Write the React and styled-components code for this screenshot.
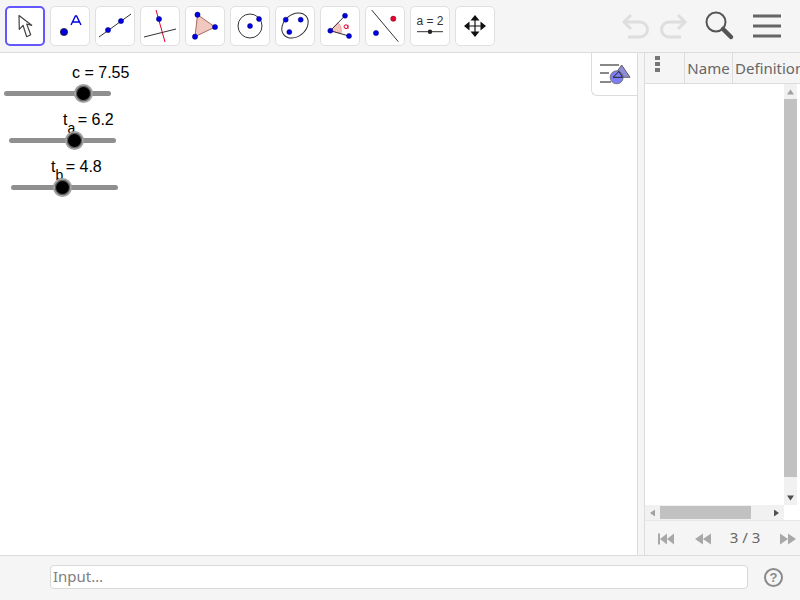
import React from 'react';
import styled, { createGlobalStyle } from 'styled-components';

const GlobalStyle = createGlobalStyle`
  html, body {
    margin: 0;
    padding: 0;
    background: #fff;
  }
  #root {
    width: 800px;
    height: 600px;
    overflow: hidden;
  }
`;

const Page = styled.div`
  width: 800px;
  height: 600px;
  display: flex;
  flex-direction: column;
  font-family: "Liberation Sans", Arial, sans-serif;
  background: #fff;
`;

const Toolbar = styled.div`
  height: 53px;
  flex: none;
  display: flex;
  align-items: flex-start;
  padding: 6px 0 0 5px;
  box-sizing: border-box;
  gap: 5px;
  background: #f5f5f5;
  border-bottom: 1px solid #dcdcdc;
`;

const ToolButton = styled.div`
  width: 40px;
  height: 40px;
  box-sizing: border-box;
  flex: none;
  background: #fff;
  border-radius: 5px;
  border: ${p => (p.$active ? '2px solid #6557ff' : '1px solid #e0e0e0')};
  display: flex;
  align-items: center;
  justify-content: center;
  svg { display: block; flex: none; }
`;

const ToolbarRight = styled.div`
  margin-left: auto;
  display: flex;
  align-items: center;
  height: 40px;
  padding-right: 19px;
  svg { display: block; }
`;

const Gap = styled.span`
  width: ${p => p.$w}px;
  flex: none;
`;

const Main = styled.div`
  flex: 1;
  display: flex;
  min-height: 0;
`;

const Graphics = styled.div`
  position: relative;
  width: 638px;
  box-sizing: border-box;
  flex: none;
  background: #fff;
  border-right: 1px solid #dcdcdc;
`;

const StyleBarTab = styled.div`
  position: absolute;
  top: 0;
  right: 0;
  width: 46px;
  height: 43px;
  box-sizing: border-box;
  background: #fff;
  border-left: 1px solid #dcdcdc;
  border-bottom: 1px solid #dcdcdc;
  border-bottom-left-radius: 6px;
  display: flex;
  align-items: center;
  justify-content: center;
`;

const SliderBox = styled.div`
  position: absolute;
  left: ${p => p.$x}px;
  top: ${p => p.$y}px;
  width: 107px;
  height: 5px;
  background: #8f8f8f;
  border-radius: 3px;
`;

const Knob = styled.div`
  position: absolute;
  left: ${p => p.$at}px;
  top: -7px;
  width: 19px;
  height: 19px;
  box-sizing: border-box;
  border-radius: 50%;
  background: #000;
  border: 2.5px solid #a0a0a0;
  box-shadow: inset 0 0 0 1px #606060;
`;

const SliderLabel = styled.div`
  position: absolute;
  left: ${p => p.$x}px;
  top: ${p => p.$y}px;
  font-size: 16px;
  line-height: 18px;
  color: #000;
  white-space: nowrap;
`;

const Sub = styled.span`
  position: relative;
  top: 8px;
  font-size: 14px;
  margin-right: -2px;
`;

const Splitter = styled.div`
  width: 6px;
  flex: none;
  background: #f5f5f5;
  border-right: 1px solid #dcdcdc;
`;

const AlgebraPanel = styled.div`
  flex: 1;
  min-width: 0;
  display: flex;
  flex-direction: column;
  overflow: hidden;
`;

const TableHead = styled.div`
  height: 31px;
  flex: none;
  box-sizing: border-box;
  display: flex;
  background: #f5f5f5;
  border-bottom: 1px solid #dcdcdc;
`;

const HeadCell = styled.div`
  width: ${p => p.$w}px;
  flex: none;
  box-sizing: border-box;
  border-right: ${p => (p.$last ? 'none' : '1px solid #dcdcdc')};
  display: flex;
  align-items: center;
  justify-content: ${p => (p.$last ? 'flex-start' : 'center')};
  padding-left: ${p => (p.$last ? '2px' : '0')};
  font-family: "Noto Sans", sans-serif;
  font-size: 15px;
  color: #666;
  white-space: nowrap;
`;

const Dots = styled.div`
  display: flex;
  flex-direction: column;
  gap: 2px;
  margin: -9px 15px 0 0;
  span {
    width: 5px;
    height: 4px;
    background: #777;
  }
`;

const TableBody = styled.div`
  flex: 1;
  display: flex;
  min-height: 0;
`;

const TableArea = styled.div`
  flex: 1;
  background: #fff;
`;

const VScroll = styled.div`
  width: 13px;
  flex: none;
  margin-right: 3px;
  background: #f1f1f1;
  display: flex;
  flex-direction: column;
`;

const ScrollArrow = styled.div`
  height: 15px;
  flex: none;
  display: flex;
  align-items: center;
  justify-content: center;
`;

const VThumb = styled.div`
  height: 378px;
  flex: none;
  background: #c1c1c1;
`;

const VTrack = styled.div`
  flex: 1;
`;

const HScrollRow = styled.div`
  height: 15px;
  flex: none;
  display: flex;
  background: #fff;
`;

const HScroll = styled.div`
  width: 139px;
  flex: none;
  background: #f1f1f1;
  display: flex;
  align-items: stretch;
`;

const HArrow = styled.div`
  width: 15px;
  flex: none;
  display: flex;
  align-items: center;
  justify-content: center;
`;

const HThumb = styled.div`
  width: 91px;
  flex: none;
  margin: 1px 0;
  background: #c1c1c1;
`;

const HTrack = styled.div`
  flex: 1;
`;

const Pager = styled.div`
  height: 35px;
  flex: none;
  display: flex;
  align-items: center;
  background: #f5f5f5;
  border-top: 1px solid #e8e8e8;
  box-sizing: border-box;
  padding: 2px 0 0 12px;
  svg { display: block; flex: none; }
`;

const PageText = styled.div`
  width: 54px;
  flex: none;
  text-align: center;
  font-family: "Noto Sans", sans-serif;
  font-size: 15px;
  color: #666;
  margin: -5px 7px 0 6px;
`;

const InputBar = styled.div`
  height: 45px;
  flex: none;
  box-sizing: border-box;
  display: flex;
  align-items: center;
  padding: 0 17px 2px 50px;
  background: #f5f5f5;
  border-top: 1px solid #dcdcdc;
`;

const InputField = styled.div`
  width: 698px;
  height: 24px;
  box-sizing: border-box;
  flex: none;
  background: #fff;
  border: 1px solid #d8d8d8;
  border-radius: 4px;
  padding-left: 2px;
  font-family: "Noto Sans", sans-serif;
  font-size: 15px;
  line-height: 21px;
  color: #808080;
`;

const HelpIcon = styled.div`
  margin-left: auto;
  width: 19px;
  height: 19px;
  box-sizing: border-box;
  border: 2px solid #8a8a8a;
  border-radius: 50%;
  display: flex;
  align-items: center;
  justify-content: center;
  font-size: 13px;
  font-weight: bold;
  color: #8a8a8a;
`;

const NumberLabel = styled.text`
  font-family: "Liberation Sans", sans-serif;
  font-size: 12px;
  fill: #333;
`;

const Flippable = styled.svg`
  transform: ${p => (p.$flip ? 'scaleX(-1)' : 'none')};
`;

const TriangleSvg = styled.svg`
  transform: rotate(${p => p.$rotate}deg);
`;

const Blue = '#0000e0';
const Ring = '#00007a';

const Pt = ({ x, y, r = 2.6, fill = Blue }) => (
  <circle cx={x} cy={y} r={r} fill={fill} stroke={fill === Blue ? Ring : '#8a0018'} strokeWidth="0.5" />
);

const MoveIcon = () => (
  <svg width="20" height="24" viewBox="0 0 20 24">
    <path d="M4 1.5 L4.3 15.3 L8 11.3 L11.7 22.7 L15.7 20.7 L11.7 10 L16.7 11.3 Z" fill="#fff" stroke="#444" strokeWidth="1.2" strokeLinejoin="round" />
  </svg>
);

const PointIcon = () => (
  <svg width="32" height="32" viewBox="0 0 32 32">
    <circle cx="10" cy="22" r="3.6" fill={Blue} stroke="#222" strokeWidth="0.8" />
    <path d="M17 15 L21.4 6 L22.6 6 L27 15 M18.8 12 L25.2 12" fill="none" stroke={Blue} strokeWidth="1.4" />
  </svg>
);

const LineIcon = () => (
  <svg width="36" height="32" viewBox="0 0 36 32">
    <path d="M2 27 L34 4" stroke="#333" strokeWidth="1" />
    <Pt x={11} y={20} />
    <Pt x={24} y={11} />
  </svg>
);

const PerpIcon = () => (
  <svg width="36" height="36" viewBox="0 0 36 36">
    <path d="M14 2 L23 34" stroke="#e4002b" strokeWidth="1" />
    <path d="M2 29 L34 21" stroke="#333" strokeWidth="1" />
    <Pt x={17} y={11} />
  </svg>
);

const PolygonIcon = () => (
  <svg width="32" height="34" viewBox="0 0 32 34">
    <path d="M8.5 5.7 L26 18 L6 27.7 Z" fill="#f0c8c0" stroke="#a86a5e" strokeWidth="1" />
    <Pt x={8.5} y={5.7} />
    <Pt x={26} y={18} />
    <Pt x={6} y={27.7} />
  </svg>
);

const CircleIcon = () => (
  <svg width="32" height="32" viewBox="0 0 32 32">
    <circle cx="16" cy="16" r="12" fill="none" stroke="#333" strokeWidth="1" />
    <Pt x={16} y={16} r={2.5} />
    <Pt x={25} y={9} r={2.5} />
  </svg>
);

const EllipseIcon = () => (
  <svg width="32" height="34" viewBox="0 0 32 34">
    <ellipse cx="16" cy="16.5" rx="14.5" ry="11" transform="rotate(-40 16 16.5)" fill="none" stroke="#333" strokeWidth="1" />
    <Pt x={6.7} y={10.7} r={2.5} />
    <Pt x={21.7} y={10.7} r={2.5} />
    <Pt x={10.3} y={23} r={2.5} />
  </svg>
);

const AngleIcon = () => (
  <svg width="34" height="32" viewBox="0 0 34 32">
    <path d="M7.3 20.7 L15 12.8 A11 11 0 0 1 17.9 23.7 Z" fill="#f4c6bc" stroke="#e4002b" strokeWidth="0.3" />
    <path d="M7.3 20.7 L22 5.7 M7.3 20.7 L26 26" stroke="#333" strokeWidth="1" fill="none" />
    <Pt x={7.3} y={20.7} r={2.5} />
    <Pt x={22} y={5.7} r={2.5} />
    <Pt x={26} y={26} r={2.5} />
    <circle cx="23" cy="16.7" r="1.9" fill="none" stroke="#e4002b" strokeWidth="1" />
    <path d="M25 14.8 L25 19" stroke="#e4002b" strokeWidth="0.8" />
  </svg>
);

const ReflectIcon = () => (
  <svg width="36" height="36" viewBox="0 0 36 36">
    <path d="M4.7 2 L31.3 33.7" stroke="#333" strokeWidth="1" />
    <Pt x={9} y={25} />
    <Pt x={26.3} y={10.7} fill="#e4002b" />
  </svg>
);

const SliderIcon = () => (
  <svg width="36" height="32" viewBox="0 0 36 32">
    <NumberLabel x="18" y="15" textAnchor="middle">a = 2</NumberLabel>
    <path d="M5 21.7 L31 21.7" stroke="#333" strokeWidth="1" />
    <circle cx="18" cy="21.7" r="2.2" fill="#222" />
  </svg>
);

const MoveViewIcon = () => (
  <svg width="24" height="24" viewBox="0 0 24 24">
    <path d="M12 2 V22 M2 12 H22" stroke="#111" strokeWidth="1.2" />
    <path d="M12 1 L16.5 6.5 H7.5 Z M12 23 L16.5 17.5 H7.5 Z M1 12 L6.5 7.5 V16.5 Z M23 12 L17.5 7.5 V16.5 Z" fill="#111" />
  </svg>
);

const UndoIcon = ({ flip }) => (
  <Flippable $flip={flip} width="30" height="26" viewBox="0 0 30 26">
    <path d="M3 9 H19 A7.5 7.5 0 0 1 19 24 H7" fill="none" stroke="#dedede" strokeWidth="3" />
    <path d="M10 2 L3 9 L10 16" fill="none" stroke="#dedede" strokeWidth="3" />
  </Flippable>
);

const SearchIcon = () => (
  <svg width="30" height="30" viewBox="0 0 30 30">
    <circle cx="11" cy="11" r="9.5" fill="none" stroke="#555" strokeWidth="2" />
    <path d="M18 18 L26 26" stroke="#555" strokeWidth="4.5" strokeLinecap="round" />
  </svg>
);

const MenuIcon = () => (
  <svg width="28" height="24" viewBox="0 0 28 24">
    <path d="M0 2 H28 M0 12 H28 M0 22 H28" stroke="#666" strokeWidth="3" />
  </svg>
);

const StyleBarIcon = () => (
  <svg width="34" height="26" viewBox="0 0 34 26">
    <path d="M2 4 H21 M2 12 H11 M2 21 H13" stroke="#888" strokeWidth="2" />
    <path d="M23.7 4 L32 16.3 H15 Z" fill="#8f8fd8" stroke="#444" strokeWidth="0.8" />
    <circle cx="18.7" cy="16.3" r="6.5" fill="#7f7ff5" stroke="#666" strokeWidth="0.8" />
    <path d="M15 16.3 L24.5 16.3 L21 10.5 Z" fill="none" stroke="#222" strokeWidth="1" />
  </svg>
);

const SkipIcon = ({ flip, bar }) => (
  <Flippable $flip={flip} width="18" height="12" viewBox="0 0 18 12">
    {bar && <path d="M1 0.5 H3 V11.5 H1 Z" fill="#a8a8a8" />}
    <path d={bar ? 'M3 6 L10 0.5 V11.5 Z M10 6 L17 0.5 V11.5 Z' : 'M1 6 L9 0.5 V11.5 Z M9 6 L17 0.5 V11.5 Z'} fill="#a8a8a8" />
  </Flippable>
);

const Triangle = ({ rotate, color }) => (
  <TriangleSvg $rotate={rotate} width="7" height="6" viewBox="0 0 7 6">
    <path d="M0 0.5 H7 L3.5 5.5 Z" fill={color} />
  </TriangleSvg>
);

const tools = [
  MoveIcon, PointIcon, LineIcon, PerpIcon, PolygonIcon, CircleIcon,
  EllipseIcon, AngleIcon, ReflectIcon, SliderIcon, MoveViewIcon,
];

const App = () => {
  return (
    <Page>
      <GlobalStyle />
      <Toolbar>
        {tools.map((Icon, i) => (
          <ToolButton key={i} $active={i === 0}>
            <Icon />
          </ToolButton>
        ))}
        <ToolbarRight>
          <UndoIcon />
          <Gap $w={7} />
          <UndoIcon flip />
          <Gap $w={17} />
          <SearchIcon />
          <Gap $w={18} />
          <MenuIcon />
        </ToolbarRight>
      </Toolbar>
      <Main>
        <Graphics>
          <SliderLabel $x={72} $y={11}>c = 7.55</SliderLabel>
          <SliderBox $x={4} $y={38}><Knob $at={70} /></SliderBox>
          <SliderLabel $x={63} $y={58}>t<Sub>a</Sub> = 6.2</SliderLabel>
          <SliderBox $x={9} $y={85}><Knob $at={56} /></SliderBox>
          <SliderLabel $x={51} $y={105}>t<Sub>b</Sub> = 4.8</SliderLabel>
          <SliderBox $x={11} $y={132}><Knob $at={42} /></SliderBox>
          <StyleBarTab><StyleBarIcon /></StyleBarTab>
        </Graphics>
        <Splitter />
        <AlgebraPanel>
          <TableHead>
            <HeadCell $w={40}><Dots><span /><span /><span /></Dots></HeadCell>
            <HeadCell $w={48}>Name</HeadCell>
            <HeadCell $w={80} $last>Definition</HeadCell>
          </TableHead>
          <TableBody>
            <TableArea />
            <VScroll>
              <ScrollArrow><Triangle rotate={180} color="#a0a0a0" /></ScrollArrow>
              <VThumb />
              <VTrack />
              <ScrollArrow><Triangle rotate={0} color="#505050" /></ScrollArrow>
            </VScroll>
          </TableBody>
          <HScrollRow>
            <HScroll>
              <HArrow><Triangle rotate={90} color="#a0a0a0" /></HArrow>
              <HThumb />
              <HTrack />
              <HArrow><Triangle rotate={-90} color="#505050" /></HArrow>
            </HScroll>
          </HScrollRow>
          <Pager>
            <SkipIcon bar />
            <Gap $w={19} />
            <SkipIcon />
            <PageText>3 / 3</PageText>
            <SkipIcon flip />
          </Pager>
        </AlgebraPanel>
      </Main>
      <InputBar>
        <InputField>Input…</InputField>
        <HelpIcon>?</HelpIcon>
      </InputBar>
    </Page>
  );
};

export default App;
